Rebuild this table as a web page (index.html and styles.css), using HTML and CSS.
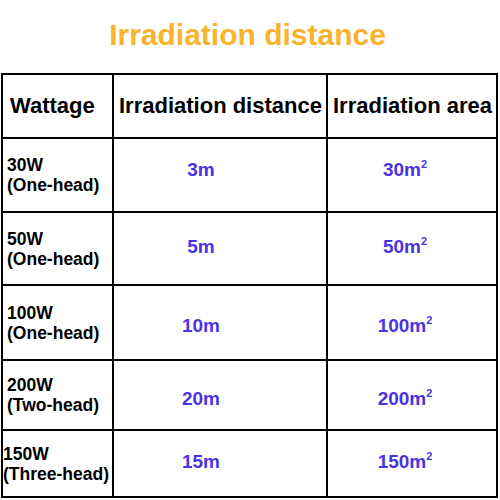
FILE: index.html
```html
<!DOCTYPE html>
<html lang="en">
<head>
    <meta charset="UTF-8">
    <meta name="viewport" content="width=device-width, initial-scale=1.0">
    <title>Irradiation distance</title>
    <link rel="stylesheet" href="styles.css">
</head>
<body>
    <h1 class="title">Irradiation distance</h1>

    <table class="spec">
        <thead>
            <tr>
                <th class="col-watt">Wattage</th>
                <th class="col-dist">Irradiation distance</th>
                <th class="col-area">Irradiation area</th>
            </tr>
        </thead>
        <tbody>
            <tr class="row-1">
                <td class="watt">30W<br>(One-head)</td>
                <td class="dist">3m</td>
                <td class="area">30m<sup>2</sup></td>
            </tr>
            <tr class="row-2">
                <td class="watt">50W<br>(One-head)</td>
                <td class="dist">5m</td>
                <td class="area">50m<sup>2</sup></td>
            </tr>
            <tr class="row-3">
                <td class="watt">100W<br>(One-head)</td>
                <td class="dist">10m</td>
                <td class="area">100m<sup>2</sup></td>
            </tr>
            <tr class="row-4">
                <td class="watt">200W<br>(Two-head)</td>
                <td class="dist">20m</td>
                <td class="area">200m<sup>2</sup></td>
            </tr>
            <tr class="row-5">
                <td class="watt watt-tight">150W<br>(Three-head)</td>
                <td class="dist">15m</td>
                <td class="area">150m<sup>2</sup></td>
            </tr>
        </tbody>
    </table>
</body>
</html>
```

FILE: styles.css
```css
body {
    margin: 0;
    background: #fff;
    font-family: "Liberation Sans", Arial, sans-serif;
    color: #000;
}

.title {
    margin: 18px 0 21px;
    padding-right: 5px;
    font-size: 30px;
    line-height: 34px;
    font-weight: bold;
    text-align: center;
    color: #f9b42e;
}

.spec {
    margin-left: 1px;
    width: 497px;
    table-layout: fixed;
    border-collapse: separate;
    border-spacing: 0;
    border-top: 2px solid #000;
    border-left: 2px solid #000;
}

.spec th,
.spec td {
    box-sizing: border-box;
    padding: 0;
    border-right: 2px solid #000;
    border-bottom: 2px solid #000;
    font-weight: bold;
    vertical-align: middle;
}

.spec th {
    height: 64px;
    padding-left: 5px;
    font-size: 22px;
    text-align: left;
    white-space: nowrap;
}

.col-watt {
    width: 111px;
}

.spec th.col-watt {
    padding-left: 7px;
}

.col-dist {
    width: 214px;
}

.col-area {
    width: 170px;
}

.row-1 td { height: 74px; }
.row-2 td { height: 73px; }
.row-3 td { height: 75px; }
.row-4 td { height: 70px; }
.row-5 td { height: 67px; }

.spec td.watt {
    padding-left: 4px;
    font-size: 17.5px;
    line-height: 20px;
    white-space: nowrap;
}

.spec td.watt-tight {
    padding-left: 0;
}

.dist,
.area {
    font-size: 19px;
    color: #4a34e0;
    text-align: center;
}

.spec td.dist {
    padding-right: 38px;
}

.spec td.area {
    padding-right: 14px;
}

/* values don't sit exactly mid-row in the source */
.row-1 td.dist, .row-1 td.area { padding-bottom: 11px; }
.row-2 td.dist, .row-2 td.area { padding-bottom: 4px; }
.row-3 td.dist, .row-3 td.area { padding-top: 6px; }
.row-4 td.dist, .row-4 td.area { padding-top: 7px; }
.row-5 td.dist, .row-5 td.area { padding-bottom: 4px; }

.area sup {
    font-size: 11px;
    line-height: 0;
    vertical-align: 8px;
}
```
